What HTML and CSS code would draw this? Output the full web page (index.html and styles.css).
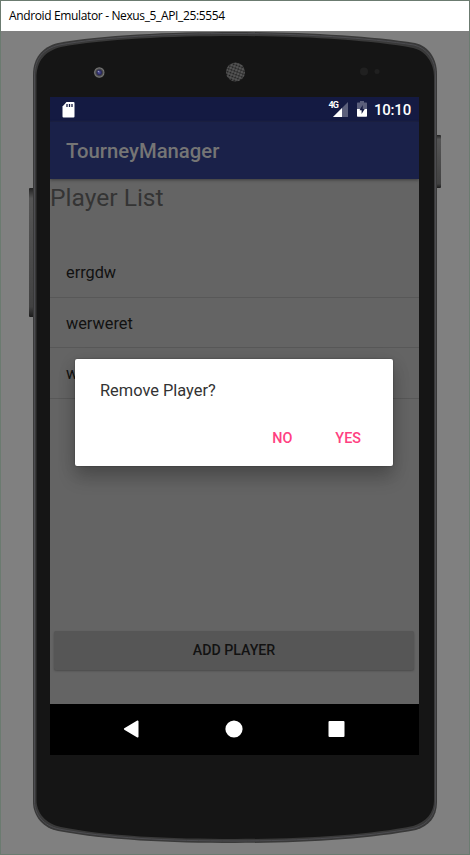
FILE: index.html
```html
<!DOCTYPE html>
<html lang="en">
<head>
<meta charset="utf-8">
<title>Android Emulator - Nexus_5_API_25:5554</title>
<link rel="stylesheet" href="styles.css">
</head>
<body>
<div class="window">
  <header class="titlebar"><span class="window-title">Android Emulator - Nexus_5_API_25:5554</span></header>
  <main class="stage">
    <svg class="device" width="470" height="824" viewBox="0 31 470 824" aria-hidden="true">
      <defs>
        <pattern id="mesh" width="3" height="3" patternUnits="userSpaceOnUse" patternTransform="rotate(20)">
          <rect width="3" height="3" fill="#5a5a5a"/><circle cx="1.5" cy="1.5" r="1.1" fill="#1c1c1c"/>
        </pattern>
        <linearGradient id="key" x1="0" y1="0" x2="0" y2="1">
          <stop offset="0" stop-color="#222"/><stop offset=".08" stop-color="#555"/><stop offset=".92" stop-color="#424242"/><stop offset="1" stop-color="#1c1c1c"/>
        </linearGradient>
        <radialGradient id="lens">
          <stop offset="0" stop-color="#5555a0"/><stop offset=".4" stop-color="#29295e"/><stop offset=".6" stop-color="#444"/><stop offset=".85" stop-color="#777"/><stop offset="1" stop-color="#333"/>
        </radialGradient>
      </defs>
      <rect x="29" y="188" width="5" height="129" rx="1" fill="url(#key)"/>
      <rect x="436" y="135" width="5" height="53" rx="1" fill="url(#key)"/>
      <path d="M33 75C33 58 42 47 58 43C100 35 170 32 235 32C300 32 370 36 415 43C429 46 437 59 437 74V802C437 817 429 826 416 830C370 839 300 843 235 843C170 843 105 840 58 831C43 828 33 816 33 802Z" fill="#393939"/>
      <path d="M34.500 76C34.500 59 43 49 59 45C102 37 170 33.500 235 33.500C300 33.500 370 38 414 45C427 48 435.500 60 435.500 75V801C435.500 815 428 824 415 828C369 837 300 841 235 841C170 841 105 838 59 829C44 826 34.500 815 34.500 801Z" fill="none" stroke="#4c4c50" stroke-width="1"/>
      <path d="M36.500 78C36.500 61 45 51 61 47C103 39 170 36 235 36C300 36 370 40 413 48C426 51 434 63 434 77V800C434 813 426 822 413 826C369 835 300 839 235 839C170 839 105 836 61 827C46 824 36.500 813 36.500 800Z" fill="#151515"/>
      <circle cx="99.300" cy="72.500" r="5.500" fill="url(#lens)"/>
      <circle cx="98.500" cy="71.500" r=".8" fill="#9a9ac0"/>
      <circle cx="235.500" cy="72" r="9.500" fill="url(#mesh)"/>
      <circle cx="364" cy="71.500" r="4" fill="#202020"/>
      <circle cx="377" cy="71.500" r="2.500" fill="#202020"/>
    </svg>
    <section class="screen">
      <div class="statusbar">
        <svg class="sd" width="13" height="16" viewBox="0 0 13 16"><path d="M4.500 0H11.500Q12.500 0 12.500 1V14.500Q12.500 15.500 11.500 15.500H1.500Q.5 15.500 .5 14.500V4.500Z" fill="#fff"/><path d="M5 2v3M7.500 2v3M10 2v3" stroke="#141a42" stroke-width="1.300"/></svg>
        <div class="status-right">
          <span class="network">4G</span>
          <svg class="signal" width="15" height="15" viewBox="0 0 15 15"><path d="M0 15L15 0V15Z" fill="#5b5f7b"/><path d="M0 15L9 6V15Z" fill="#fff"/></svg>
          <svg class="battery" width="10" height="16" viewBox="0 0 10 16"><path d="M3 0H7V1.500H9.300Q10 1.500 10 2.300V8H0V2.300Q0 1.500 .7 1.500H3Z" fill="#5b5f7b"/><path d="M0 8H10V15Q10 15.700 9.300 15.700H.7Q0 15.700 0 15Z" fill="#fff"/><path d="M5.700 4L2.500 9.300H4.600V13L7.700 8H5.700Z" fill="#141a42"/></svg>
          <span class="clock">10:10</span>
        </div>
      </div>
      <div class="appbar"><span class="app-title">TourneyManager</span></div>
      <div class="content">
        <h1 class="heading">Player List</h1>
        <ul class="players"><li>errgdw</li><li>werweret</li><li>w</li></ul>
        <div class="add">ADD PLAYER</div>
      </div>
      <div class="navbar">
        <svg width="16" height="18" viewBox="0 0 16 18"><path d="M14.700 1.300V16.700L1.700 9Z" fill="#fff" stroke="#fff" stroke-width="1.600" stroke-linejoin="round"/></svg>
        <svg width="18" height="18" viewBox="0 0 18 18"><circle cx="9" cy="9" r="8.600" fill="#fff"/></svg>
        <svg width="17" height="18" viewBox="0 0 17 18"><rect x=".5" y="1" width="16" height="16" rx="1" fill="#fff"/></svg>
      </div>
      <div class="dialog" role="dialog">
        <p class="message">Remove Player?</p>
        <div class="actions"><span class="no">NO</span><span class="yes">YES</span></div>
      </div>
    </section>
  </main>
</div>
</body>
</html>
```
FILE: styles.css
```css
* { box-sizing: border-box; }
body { margin: 0; font-family: Roboto, sans-serif; }
.window { position: relative; width: 470px; height: 855px; display: flex; flex-direction: column; background: #808080; overflow: hidden; }
.window::after { content: ""; position: absolute; inset: 0; border: 1px solid #6b7b70; pointer-events: none; }
.titlebar { height: 31px; padding: 0 9px; display: flex; align-items: center; background: #fff; }
.window-title { font: 12px/18px "Open Sans", sans-serif; letter-spacing: -.36px; color: #000; white-space: nowrap; padding-top: 1px; }
.stage { position: relative; flex: 1; padding: 66px 51px 0 50px; }
.device { position: absolute; left: 0; top: 0; }
.screen { position: relative; height: 658px; display: flex; flex-direction: column; background: #646464; overflow: hidden; }
.statusbar { height: 25px; padding: 0 8px 0 12px; display: flex; justify-content: space-between; align-items: center; background: #141a42; color: #fff; }
.status-right { display: flex; align-items: center; height: 25px; }
.network { font-size: 9px; line-height: 9px; font-weight: 700; letter-spacing: -.9px; margin: -9px -6px 0 0; }
.signal { margin: 0 9px 0 1px; }
.signal, .battery { position: relative; top: -.5px; }
.clock { font-size: 15px; font-weight: 500; letter-spacing: -.2px; margin-left: 7px; }
.appbar { height: 56.500px; padding: 0 16px; display: flex; align-items: center; background: #1a2149; box-shadow: 0 1px 3px #3c3c3c; z-index: 1; }
.app-title { font-size: 20.300px; font-weight: 500; color: #757575; padding-top: 2px; }
.content { height: 525.500px; display: flex; flex-direction: column; }
.heading { margin: 0; font-size: 24.600px; line-height: 37px; font-weight: 400; color: #343434; }
.players { list-style: none; margin: 31.500px 0 0; padding: 0; }
.players li { height: 50.500px; padding: 1px 16px 0; font-size: 16.300px; line-height: 50px; color: #111; border-bottom: 1px solid #585858; }
.add { margin: auto 5px 34px 4px; height: 39px; border-radius: 2px; background: #565656; box-shadow: 0 1px 2px #4a4a4a; color: #121212; font-size: 14.200px; font-weight: 500; line-height: 39px; text-align: center; }
.navbar { height: 51px; padding: 0 74px 1px 73px; display: flex; justify-content: space-between; align-items: center; background: #000; }
.dialog { position: absolute; left: 25px; top: 262px; width: 318px; height: 106.500px; padding: 21px 25px 0; background: #fff; border-radius: 2px; box-shadow: 0 12px 18px rgba(0,0,0,.2), 0 4px 18px rgba(0,0,0,.12), 0 0 2px rgba(0,0,0,.4); }
.message { margin: 0; font-size: 16.400px; line-height: 22px; color: #333; }
.actions { display: flex; justify-content: flex-end; gap: 43px; margin: 27px 7px 0 0; font-size: 14.400px; line-height: 20px; font-weight: 500; color: #ff4081; }
```
